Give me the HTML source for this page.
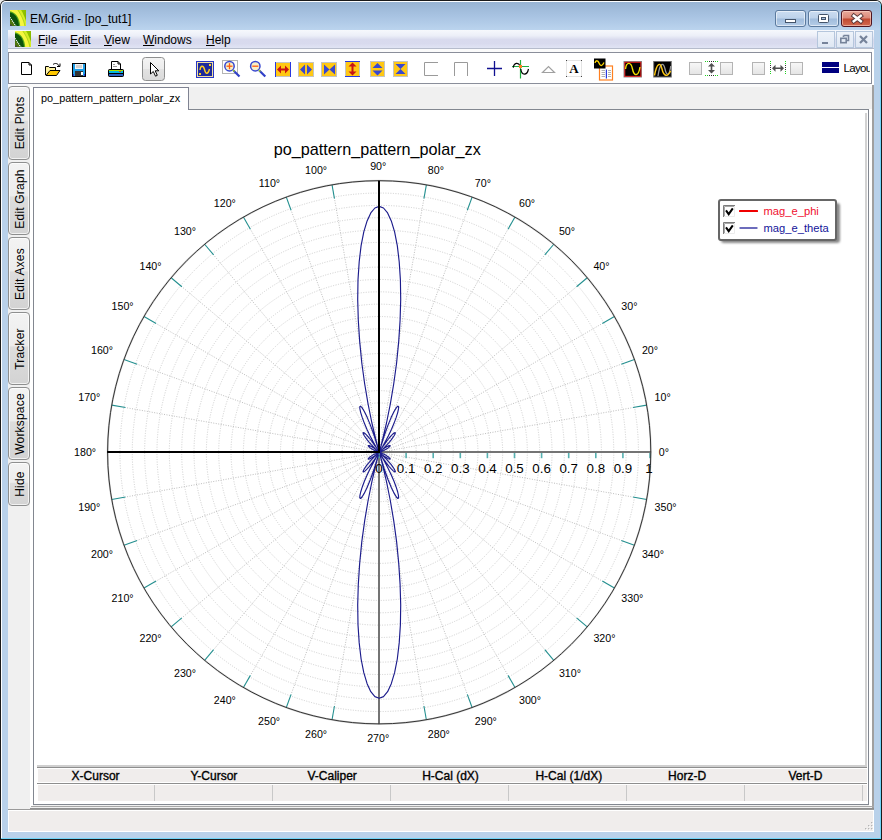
<!DOCTYPE html>
<html><head><meta charset="utf-8"><title>EM.Grid - [po_tut1]</title>
<style>
html,body{margin:0;padding:0;}
body{width:882px;height:840px;overflow:hidden;background:#ececec;font-family:"Liberation Sans",Arial,sans-serif;font-size:12px;color:#000;position:relative;}
.abs{position:absolute;}
#win{position:absolute;left:0;top:0;width:882px;height:840px;background:#1a1a1a;border-radius:6px 6px 0 0;}
#frame{position:absolute;left:1px;top:1px;width:880px;height:838px;background:#b9d1ea;border-radius:5px 5px 0 0;box-shadow:inset -1px -1px 0 #6fd4f8, inset 1px 1px 0 #fdfeff;}
#frameHi{display:none}
#title{position:absolute;left:2px;top:2px;width:878px;height:28px;border-radius:4px 4px 0 0;background:linear-gradient(#98b4d3,#a8c3e2 50%,#bbd4ee);}
#ttext{position:absolute;left:30px;top:12px;font-size:12px;line-height:14px;white-space:nowrap;}
.cap{position:absolute;top:10px;height:17px;width:31px;border-radius:3px;box-sizing:border-box;border:1px solid #5b7a9e;box-shadow:inset 0 0 0 1px rgba(255,255,255,.55);background:linear-gradient(#cbddf1,#bdd2ea 48%,#a0bcdc 52%,#b4cce7);}
.cap.close{border-color:#4e1420;background:linear-gradient(#e8aa9c,#dc8878 48%,#c04830 52%,#d26a50);box-shadow:inset 0 0 0 1px rgba(255,220,210,.55);}
#menubar{position:absolute;left:8px;top:30px;width:866px;height:19px;background:linear-gradient(#f6f8fc 0,#eceff8 30%,#d9dbee 50%,#d8daee 70%,#e2e6f5 100%);box-shadow:inset 0 -1px 0 #b6bccc;}
.mi{position:absolute;top:33px;font-size:12px;line-height:14px;white-space:nowrap;}
.mi u{text-decoration:underline;}
.mdi{position:absolute;top:31px;width:17px;height:17px;box-sizing:border-box;border:1px solid #b5c6dc;background:linear-gradient(#eef3fa,#dfe7f3);}
#client{position:absolute;left:8px;top:49px;width:866px;height:783px;background:#f0f0f0;}
#tbgap{position:absolute;left:8px;top:49px;width:866px;height:3px;background:#fbfbfb;}
#toolbar{position:absolute;left:8px;top:52px;width:864px;height:32px;box-sizing:border-box;border:1px solid #8a8e9a;background:#fff;}
#tbunder{position:absolute;left:8px;top:84px;width:866px;height:3px;background:#fafafa;}
.vtab{position:absolute;left:8px;width:22px;box-sizing:border-box;border:1px solid #8e8f8f;border-radius:4px;background:linear-gradient(#f3f3f3,#ececec 46%,#dddddd 48%,#d3d3d3);box-shadow:inset 0 0 0 1px rgba(255,255,255,.7);}
.vtab span{position:absolute;left:calc(50% + 1px);top:50%;white-space:nowrap;font-size:12px;letter-spacing:0.2px;line-height:14px;transform:translate(-50%,-50%) rotate(-90deg);}
#ptab{position:absolute;left:33px;top:87px;width:156px;height:23px;box-sizing:border-box;border:1px solid #7f8392;border-bottom:none;background:#fff;}
#ptab span{position:absolute;left:7px;top:4px;font-size:10.9px;line-height:13px;white-space:nowrap;}
#pframe{position:absolute;left:33px;top:109px;width:836px;height:696px;box-sizing:border-box;border:1px solid #828790;background:#fff;}
#pwhite{position:absolute;left:30px;top:87px;width:3px;height:720px;background:#fff;}
.th{position:absolute;top:769px;height:14px;font-size:12px;font-weight:normal;-webkit-text-stroke:0.35px #000;line-height:14px;text-align:center;width:118px;white-space:nowrap;}
</style></head><body>
<div id="win">
<div id="frame"></div><div id="frameHi"></div>
<div id="title"></div>
<svg class="abs" style="left:10px;top:10px" width="16" height="16" viewBox="0 0 16 16"><defs><filter id="ba" x="-10%" y="-10%" width="120%" height="120%"><feGaussianBlur stdDeviation="0.45"/></filter><clipPath id="ca"><rect width="16" height="16"/></clipPath><linearGradient id="ga" x1="0" y1="0" x2="1" y2="1"><stop offset="0" stop-color="#a4d400"/><stop offset="1" stop-color="#74a800"/></linearGradient></defs><rect width="16" height="16" fill="#7cb200"/><g clip-path="url(#ca)"><g filter="url(#ba)"><rect x="6" y="-1" width="11" height="18" fill="url(#ga)"/><path d="M-1 -1H10.500C13.500 4 15.800 9 16.500 13.500V17H-1Z" fill="#d6ee28"/><path d="M-1 -1H6.800C10.500 4 13.600 10 14.800 17H-1Z" fill="#f6f640"/><path d="M7.200 -1C10.800 4 14 10 15.200 17" fill="none" stroke="#9cc414" stroke-width="0.600"/><path d="M-1 1.200C5 1.500 9.800 7 10.300 17H-1Z" fill="#56a818"/><path d="M-1 2.600C4.500 2.800 8.600 7.500 9 17H-1Z" fill="#075210"/><path d="M-1 9C2.500 10 5 13 5.600 17H-1Z" fill="#4f7410"/></g><path d="M0 7.300L5.900 16.200" stroke="#fff" stroke-width="1.200" stroke-dasharray="1.100 0.900"/><rect x="0" y="14.500" width="2" height="1.500" fill="#443848" opacity=".8"/></g></svg>
<div id="ttext">EM.Grid - [po_tut1]</div>
<div class="cap" style="left:775px"><svg width="28" height="15" style="position:absolute;left:0;top:0"><rect x="9.5" y="8.5" width="10" height="3" fill="#fff" stroke="#44546a" stroke-width="1"/></svg></div>
<div class="cap" style="left:808px"><svg width="28" height="15" style="position:absolute;left:0;top:0"><rect x="9.500" y="3.500" width="10" height="8" rx="1" fill="#fff" stroke="#44546a" stroke-width="1"/><rect x="12.5" y="6.500" width="4" height="2" fill="#a9c0dc" stroke="#44546a" stroke-width="1"/></svg></div>
<div class="cap close" style="left:841px;width:31px"><svg width="29" height="15" style="position:absolute;left:0;top:0"><path d="M11.800 4.800L18.800 10.200M18.800 4.800L11.800 10.200" stroke="#5a3838" stroke-width="4.400" stroke-linecap="square"/><path d="M11.800 4.800L18.800 10.200M18.800 4.800L11.800 10.200" stroke="#fff" stroke-width="2.500" stroke-linecap="square"/></svg></div>
<div id="menubar"></div>
<svg class="abs" style="left:15px;top:31px" width="16" height="16" viewBox="0 0 16 16"><defs><filter id="bm" x="-10%" y="-10%" width="120%" height="120%"><feGaussianBlur stdDeviation="0.45"/></filter><clipPath id="cm"><rect width="16" height="16"/></clipPath><linearGradient id="gm" x1="0" y1="0" x2="1" y2="1"><stop offset="0" stop-color="#a4d400"/><stop offset="1" stop-color="#74a800"/></linearGradient></defs><rect width="16" height="16" fill="#7cb200"/><g clip-path="url(#cm)"><g filter="url(#bm)"><rect x="6" y="-1" width="11" height="18" fill="url(#gm)"/><path d="M-1 -1H10.500C13.500 4 15.800 9 16.500 13.500V17H-1Z" fill="#d6ee28"/><path d="M-1 -1H6.800C10.500 4 13.600 10 14.800 17H-1Z" fill="#f6f640"/><path d="M7.200 -1C10.800 4 14 10 15.200 17" fill="none" stroke="#9cc414" stroke-width="0.600"/><path d="M-1 1.200C5 1.500 9.800 7 10.300 17H-1Z" fill="#56a818"/><path d="M-1 2.600C4.500 2.800 8.600 7.500 9 17H-1Z" fill="#075210"/><path d="M-1 9C2.500 10 5 13 5.600 17H-1Z" fill="#4f7410"/></g><path d="M0 7.300L5.900 16.200" stroke="#fff" stroke-width="1.200" stroke-dasharray="1.100 0.900"/><rect x="0" y="14.500" width="2" height="1.500" fill="#443848" opacity=".8"/></g></svg>
<div class="mi" style="left:38px"><u>F</u>ile</div>
<div class="mi" style="left:70px"><u>E</u>dit</div>
<div class="mi" style="left:104px"><u>V</u>iew</div>
<div class="mi" style="left:143px"><u>W</u>indows</div>
<div class="mi" style="left:206px"><u>H</u>elp</div>
<div class="mdi" style="left:817px;width:18px"><svg width="15" height="15" style="position:absolute;left:0;top:0"><rect x="4" y="10" width="6" height="2" fill="#76839a"/></svg></div>
<div class="mdi" style="left:836px;width:18px"><svg width="15" height="15" style="position:absolute;left:0;top:0"><path d="M6.500 3.500H11.500V8.500H10M6.500 5V3.500" fill="none" stroke="#76839a" stroke-width="1.600"/><rect x="3.800" y="6.300" width="5.400" height="4.400" fill="none" stroke="#76839a" stroke-width="1.600"/></svg></div>
<div class="mdi" style="left:855px;width:18px"><svg width="15" height="15" style="position:absolute;left:0;top:0"><path d="M4 4L11 11M11 4L4 11" stroke="#76839a" stroke-width="2.200"/></svg></div>
<div id="client"></div>
<div id="tbgap"></div>
<div id="toolbar"></div>
<svg class="abs" style="left:9px;top:53px" width="862" height="30" viewBox="9 53 862 30">
<path d="M21.500 62.500H29L31.500 65V74.500H21.500Z" fill="#fff" stroke="#000" stroke-width="1"/><path d="M29 62.500V65H31.500" fill="none" stroke="#000" stroke-width="1"/>
<path d="M45.500 75V66.500H48.500L49.500 67.500H55.500V70.500" fill="#fff3a0" stroke="#000" stroke-width="1"/><path d="M46 75.500L50 70.500H60L56.500 75.500Z" fill="#ffc800" stroke="#000" stroke-width="1"/><path d="M53 64.500C55 62.800 58 63.200 59 66" fill="none" stroke="#000" stroke-width="1"/><path d="M57 66.500H60V63.500" fill="none" stroke="#000" stroke-width="1"/>
<rect x="72.500" y="63.500" width="13" height="13" fill="#1e9ee8" stroke="#000" stroke-width="1"/><rect x="75" y="64" width="8" height="5" fill="#f4f4f4"/><rect x="76" y="65" width="6" height="3" fill="#d0d0d0"/><rect x="75" y="71" width="8" height="5" fill="#333"/><rect x="81" y="72" width="2" height="3" fill="#fff"/><rect x="73" y="74" width="1" height="2" fill="#3030d0"/><rect x="84" y="74" width="1" height="2" fill="#3030d0"/>
<path d="M111.500 69V61.500H118L120.500 64V69" fill="#fff" stroke="#000" stroke-width="1"/><path d="M118 61.500V64H120.500" fill="none" stroke="#000" stroke-width="1"/><path d="M113 64.500H115M113 66.500H117" stroke="#999" stroke-width="1"/>
<rect x="108.500" y="69.500" width="15" height="7" rx="1" fill="#000" stroke="#000" stroke-width="1"/><rect x="109" y="70" width="14" height="1" fill="#a8e000"/><rect x="109" y="71" width="14" height="2" fill="#00b4e0"/><rect x="109" y="74" width="14" height="2" fill="#2a5fc0"/><rect x="119" y="71" width="2" height="1" fill="#e03020"/>
<defs><linearGradient id="bg1" x1="0" y1="0" x2="0" y2="1"><stop offset="0" stop-color="#f4f4f4"/><stop offset=".5" stop-color="#ececec"/><stop offset=".52" stop-color="#e2e2e2"/><stop offset="1" stop-color="#dadada"/></linearGradient><linearGradient id="bg2" x1="0" y1="0" x2="0" y2="1"><stop offset="0" stop-color="#f8f8f8"/><stop offset="1" stop-color="#e4e4e4"/></linearGradient></defs>
<rect x="142.500" y="57.500" width="22" height="23" rx="3" fill="url(#bg1)" stroke="#8e8f8f" stroke-width="1"/>
<path d="M150.500 62.500V74L153.300 71.500L155.500 76.200L157.300 75.300L155.200 70.800H158.800Z" fill="#fff" stroke="#000" stroke-width="1" stroke-linejoin="miter"/>
<rect x="196" y="61" width="18" height="17" fill="#2838c8"/><rect x="197" y="62" width="16" height="15" fill="#f0e0a0"/><rect x="198" y="63" width="14" height="13" fill="#1c2a9c"/><path d="M200 70C200.500 65 203.500 65 204.500 69.500S208 75 209.500 69" fill="none" stroke="#ffd020" stroke-width="1.400"/><rect x="209" y="64" width="2" height="2" fill="#ffd020"/><rect x="199" y="73" width="2" height="2" fill="#ffd020"/>
<rect x="222.500" y="60.500" width="15" height="13" fill="none" stroke="#b4b4b4" stroke-width="1"/>
<path d="M233.5 70.500L239.5 76.500" stroke="#3040c8" stroke-width="2.200"/><path d="M233.0 70L234.5 71.500" stroke="#a0d020" stroke-width="1.500"/>
<circle cx="229.5" cy="66.200" r="4.700" fill="#f7f0c8" stroke="#3848d0" stroke-width="1.500"/>
<path d="M226.5 66.200H232.5" stroke="#ff5a10" stroke-width="1.300"/>
<path d="M229.5 63.200V69.200" stroke="#ff5a10" stroke-width="1.300"/>
<path d="M259.3 70.500L265.3 76.500" stroke="#3040c8" stroke-width="2.200"/><path d="M258.8 70L260.3 71.500" stroke="#a0d020" stroke-width="1.500"/>
<circle cx="255.3" cy="66.200" r="4.700" fill="#f7f0c8" stroke="#3848d0" stroke-width="1.500"/>
<path d="M252.3 66.200H258.3" stroke="#ff5a10" stroke-width="1.300"/>
<rect x="275" y="62" width="16" height="15" fill="#ffc814"/><rect x="275.5" y="62.5" width="15" height="14" fill="none" stroke="#c4c4c4" stroke-width="1"/>
<rect x="275" y="62" width="1" height="15" fill="#2838e0"/><rect x="290" y="62" width="1" height="15" fill="#2838e0"/>
<path d="M277 69.500L281 65.500V68.500H285V65.500L289 69.500L285 73.500V70.500H281V73.500Z" fill="#c81414"/>
<rect x="298" y="62" width="16" height="15" fill="#ffc814"/><rect x="298.5" y="62.5" width="15" height="14" fill="none" stroke="#c4c4c4" stroke-width="1"/>
<path d="M300 69.500L305 64.500V74.500Z M312 69.500L307 64.500V74.500Z" fill="#3848d0"/>
<rect x="321" y="62" width="16" height="15" fill="#ffc814"/><rect x="321.5" y="62.5" width="15" height="14" fill="none" stroke="#c4c4c4" stroke-width="1"/>
<path d="M324 64.500L329.500 69.500L324 74.500Z M335 64.500L329.500 69.500L335 74.500Z" fill="#3848d0"/>
<rect x="345" y="61" width="15" height="16" fill="#ffc814"/><rect x="345.5" y="61.5" width="14" height="15" fill="none" stroke="#c4c4c4" stroke-width="1"/>
<rect x="345" y="61" width="15" height="1" fill="#2838e0"/><rect x="345" y="76" width="15" height="1" fill="#2838e0"/>
<path d="M352.500 62.500L356.500 66.500H353.500V71.500H356.500L352.500 75.500L348.500 71.500H351.500V66.500H348.500Z" fill="#c81414"/>
<rect x="370" y="61" width="15" height="16" fill="#ffc814"/><rect x="370.5" y="61.5" width="14" height="15" fill="none" stroke="#c4c4c4" stroke-width="1"/>
<path d="M377.500 63L382.500 68H372.500Z M377.500 75.500L382.500 70.500H372.500Z" fill="#3848d0"/>
<rect x="393" y="61" width="15" height="16" fill="#ffc814"/><rect x="393.5" y="61.5" width="14" height="15" fill="none" stroke="#c4c4c4" stroke-width="1"/>
<path d="M395.500 64H405.500L400.500 69Z M395.500 74H405.500L400.500 69Z" fill="#3848d0"/>
<path d="M438 62.500H424.500V75.500H438" fill="none" stroke="#9a9a9a" stroke-width="1"/>
<path d="M454.500 76V62.500H467.500V76" fill="none" stroke="#9a9a9a" stroke-width="1"/>
<path d="M487 68.500H502M494.500 61V76" stroke="#101090" stroke-width="1.300"/>
<path d="M520.500 60V78.500M512 66.500H529" stroke="#20b040" stroke-width="1.200"/>
<path d="M513.300 67.600C514 62.500 518.500 62 520 66M520.800 69C521.500 75.500 527 76 528.500 69" fill="none" stroke="#000" stroke-width="1.200"/>
<rect x="519" y="65" width="3" height="3" fill="#ff8020"/>
<path d="M542.500 72.500L548.500 66.500L554.500 72.500Z" fill="none" stroke="#a0a0a0" stroke-width="1.200"/>
<rect x="566.500" y="60.500" width="15" height="16" fill="#fff" stroke="#c8c8c8" stroke-width="1" stroke-dasharray="1 1"/>
<g fill="#444"><rect x="566" y="60" width="1" height="1"/><rect x="581" y="60" width="1" height="1"/><rect x="566" y="76" width="1" height="1"/><rect x="581" y="76" width="1" height="1"/></g>
<text x="574" y="73" text-anchor="middle" font-family="'Liberation Serif', 'Times New Roman', serif" font-weight="bold" font-size="13" fill="#000">A</text>
<rect x="599.500" y="66" width="13" height="14" fill="#fff" stroke="#ff8020" stroke-width="1.200"/>
<path d="M601.500 70.500H605M601.500 72.500H605M601.500 74.500H605M601.500 76.500H605M608 70.500H611M608 72.500H611M608 74.500H611M608 76.500H611" stroke="#b0b0b0" stroke-width="1"/><rect x="605.800" y="69.500" width="1.200" height="9" fill="#2838e0"/>
<rect x="594" y="58.500" width="11.500" height="10" fill="#000"/><path d="M595 63C595.500 60 598 60 599 63S602 67 604 62.500" fill="none" stroke="#ffd800" stroke-width="1.300"/>
<rect x="623.500" y="61" width="18.500" height="16.500" fill="#8a8a8a"/><rect x="624.300" y="61.800" width="17" height="15" fill="#e01818"/><rect x="625.300" y="62.800" width="15" height="13" fill="#000"/>
<path d="M625.500 69C626.500 61.500 631 61.500 632.500 69S638.500 77 640 67" fill="none" stroke="#f0e000" stroke-width="1.400"/>
<rect x="653.200" y="61" width="18.600" height="16.500" fill="#6a6a6a"/><rect x="654.200" y="62" width="16.600" height="14.500" fill="#000"/>
<path d="M658 76C660 62 663.500 62 665 69S669 77 670.800 66" fill="none" stroke="#9a9a9a" stroke-width="1.300"/>
<path d="M654.500 75.500C657 62 660.500 62 662 69S667.500 78 670.500 71" fill="none" stroke="#ffc810" stroke-width="1.400"/>
<rect x="689.5" y="62.500" width="12" height="12" fill="url(#bg2)" stroke="#b4b4b4" stroke-width="1"/>
<rect x="720.5" y="62.500" width="12" height="12" fill="url(#bg2)" stroke="#b4b4b4" stroke-width="1"/>
<rect x="752.5" y="62.500" width="12" height="12" fill="url(#bg2)" stroke="#b4b4b4" stroke-width="1"/>
<rect x="790.5" y="62.500" width="12" height="12" fill="url(#bg2)" stroke="#b4b4b4" stroke-width="1"/>
<path d="M705 61.500H718M705 75.500H718" stroke="#20d020" stroke-width="1" stroke-dasharray="1 1"/><path d="M709 61.500H714M709 75.500H714" stroke="#303030" stroke-width="1" stroke-dasharray="1 1"/>
<path d="M711.500 63L715 66.500H712.300V70H715L711.500 73.500L708 70H710.700V66.500H708Z" fill="#505050"/>
<path d="M770.500 61V74M785.500 61V74" stroke="#20d020" stroke-width="1" stroke-dasharray="1 1"/><path d="M770.500 65V71M785.500 65V71" stroke="#303030" stroke-width="1" stroke-dasharray="1 1"/>
<path d="M772 68.300L775.500 64.800V67.500H780.500V64.800L784 68.300L780.500 71.800V69.100H775.500V71.800Z" fill="#505050"/>
<rect x="822" y="62" width="17" height="11" fill="#000080"/><rect x="822" y="67" width="17" height="1" fill="#fff"/>
</svg>
<div class="abs" style="left:843.500px;top:60px;width:26.500px;height:16px;overflow:hidden;font-size:11.500px;letter-spacing:-0.700px;line-height:16px;white-space:nowrap">Layout</div>
<div id="tbunder"></div>
<div class="abs" style="left:872px;top:49px;width:2px;height:36px;background:#fff"></div>
<div class="vtab" style="top:86px;height:74px"><span>Edit Plots</span></div>
<div class="vtab" style="top:162px;height:73px"><span>Edit Graph</span></div>
<div class="vtab" style="top:237px;height:73px"><span>Edit Axes</span></div>
<div class="vtab" style="top:312px;height:73px"><span>Tracker</span></div>
<div class="vtab" style="top:387px;height:73px"><span>Workspace</span></div>
<div class="vtab" style="top:462px;height:44px"><span>Hide</span></div>
<div id="pwhite"></div>
<div class="abs" style="left:869px;top:87px;width:3px;height:720px;background:#fff"></div>
<div class="abs" style="left:189px;top:87px;width:683px;height:22px;background:#f0f0f0"></div>
<div class="abs" style="left:872px;top:85px;width:2px;height:725px;background:#a0a0a0"></div>
<div id="pframe"></div>
<div id="ptab"><span>po_pattern_pattern_polar_zx</span></div>
<div class="abs" style="left:865px;top:113px;width:2px;height:654px;background:#d2d2d2"></div>
<svg id="plot" width="830" height="655" viewBox="35 111 830 655" style="position:absolute;left:35px;top:111px">
<g fill="none" stroke="#cecece" stroke-width="1" stroke-dasharray="1 1.500">
<circle cx="379.2" cy="452.3" r="12.35"/>
<circle cx="379.2" cy="452.3" r="24.69"/>
<circle cx="379.2" cy="452.3" r="37.04"/>
<circle cx="379.2" cy="452.3" r="49.38"/>
<circle cx="379.2" cy="452.3" r="61.73"/>
<circle cx="379.2" cy="452.3" r="74.07"/>
<circle cx="379.2" cy="452.3" r="86.42"/>
<circle cx="379.2" cy="452.3" r="98.76"/>
<circle cx="379.2" cy="452.3" r="111.11"/>
<circle cx="379.2" cy="452.3" r="123.45"/>
<circle cx="379.2" cy="452.3" r="135.80"/>
<circle cx="379.2" cy="452.3" r="148.15"/>
<circle cx="379.2" cy="452.3" r="160.49"/>
<circle cx="379.2" cy="452.3" r="172.84"/>
<circle cx="379.2" cy="452.3" r="185.18"/>
<circle cx="379.2" cy="452.3" r="197.53"/>
<circle cx="379.2" cy="452.3" r="209.87"/>
<circle cx="379.2" cy="452.3" r="222.22"/>
<circle cx="379.2" cy="452.3" r="234.56"/>
<circle cx="379.2" cy="452.3" r="246.91"/>
<circle cx="379.2" cy="452.3" r="259.25"/>
</g>
<g fill="none" stroke="#bebebe" stroke-width="1" stroke-dasharray="1 1.500">
<line x1="379.2" y1="452.3" x2="632.89" y2="407.57"/>
<line x1="379.2" y1="452.3" x2="621.26" y2="364.20"/>
<line x1="379.2" y1="452.3" x2="602.29" y2="323.50"/>
<line x1="379.2" y1="452.3" x2="576.53" y2="286.72"/>
<line x1="379.2" y1="452.3" x2="544.78" y2="254.97"/>
<line x1="379.2" y1="452.3" x2="508.00" y2="229.21"/>
<line x1="379.2" y1="452.3" x2="467.30" y2="210.24"/>
<line x1="379.2" y1="452.3" x2="423.93" y2="198.61"/>
<line x1="379.2" y1="452.3" x2="334.47" y2="198.61"/>
<line x1="379.2" y1="452.3" x2="291.10" y2="210.24"/>
<line x1="379.2" y1="452.3" x2="250.40" y2="229.21"/>
<line x1="379.2" y1="452.3" x2="213.62" y2="254.97"/>
<line x1="379.2" y1="452.3" x2="181.87" y2="286.72"/>
<line x1="379.2" y1="452.3" x2="156.11" y2="323.50"/>
<line x1="379.2" y1="452.3" x2="137.14" y2="364.20"/>
<line x1="379.2" y1="452.3" x2="125.51" y2="407.57"/>
<line x1="379.2" y1="452.3" x2="125.51" y2="497.03"/>
<line x1="379.2" y1="452.3" x2="137.14" y2="540.40"/>
<line x1="379.2" y1="452.3" x2="156.11" y2="581.10"/>
<line x1="379.2" y1="452.3" x2="181.87" y2="617.88"/>
<line x1="379.2" y1="452.3" x2="213.62" y2="649.63"/>
<line x1="379.2" y1="452.3" x2="250.40" y2="675.39"/>
<line x1="379.2" y1="452.3" x2="291.10" y2="694.36"/>
<line x1="379.2" y1="452.3" x2="334.47" y2="705.99"/>
<line x1="379.2" y1="452.3" x2="423.93" y2="705.99"/>
<line x1="379.2" y1="452.3" x2="467.30" y2="694.36"/>
<line x1="379.2" y1="452.3" x2="508.00" y2="675.39"/>
<line x1="379.2" y1="452.3" x2="544.78" y2="649.63"/>
<line x1="379.2" y1="452.3" x2="576.53" y2="617.88"/>
<line x1="379.2" y1="452.3" x2="602.29" y2="581.10"/>
<line x1="379.2" y1="452.3" x2="621.26" y2="540.40"/>
<line x1="379.2" y1="452.3" x2="632.89" y2="497.03"/>
</g>
<g stroke="#238f8f" stroke-width="1.100">
<line x1="646.67" y1="405.14" x2="632.89" y2="407.57"/>
<line x1="634.42" y1="359.41" x2="621.26" y2="364.20"/>
<line x1="614.41" y1="316.50" x2="602.29" y2="323.50"/>
<line x1="587.26" y1="277.72" x2="576.53" y2="286.72"/>
<line x1="553.78" y1="244.24" x2="544.78" y2="254.97"/>
<line x1="515.00" y1="217.09" x2="508.00" y2="229.21"/>
<line x1="472.09" y1="197.08" x2="467.30" y2="210.24"/>
<line x1="426.36" y1="184.83" x2="423.93" y2="198.61"/>
<line x1="332.04" y1="184.83" x2="334.47" y2="198.61"/>
<line x1="286.31" y1="197.08" x2="291.10" y2="210.24"/>
<line x1="243.40" y1="217.09" x2="250.40" y2="229.21"/>
<line x1="204.62" y1="244.24" x2="213.62" y2="254.97"/>
<line x1="171.14" y1="277.72" x2="181.87" y2="286.72"/>
<line x1="143.99" y1="316.50" x2="156.11" y2="323.50"/>
<line x1="123.98" y1="359.41" x2="137.14" y2="364.20"/>
<line x1="111.73" y1="405.14" x2="125.51" y2="407.57"/>
<line x1="111.73" y1="499.46" x2="125.51" y2="497.03"/>
<line x1="123.98" y1="545.19" x2="137.14" y2="540.40"/>
<line x1="143.99" y1="588.10" x2="156.11" y2="581.10"/>
<line x1="171.14" y1="626.88" x2="181.87" y2="617.88"/>
<line x1="204.62" y1="660.36" x2="213.62" y2="649.63"/>
<line x1="243.40" y1="687.51" x2="250.40" y2="675.39"/>
<line x1="286.31" y1="707.52" x2="291.10" y2="694.36"/>
<line x1="332.04" y1="719.77" x2="334.47" y2="705.99"/>
<line x1="426.36" y1="719.77" x2="423.93" y2="705.99"/>
<line x1="472.09" y1="707.52" x2="467.30" y2="694.36"/>
<line x1="515.00" y1="687.51" x2="508.00" y2="675.39"/>
<line x1="553.78" y1="660.36" x2="544.78" y2="649.63"/>
<line x1="587.26" y1="626.88" x2="576.53" y2="617.88"/>
<line x1="614.41" y1="588.10" x2="602.29" y2="581.10"/>
<line x1="634.42" y1="545.19" x2="621.26" y2="540.40"/>
<line x1="646.67" y1="499.46" x2="632.89" y2="497.03"/>
</g>
<rect x="379.0" y="451.0" width="272.1" height="2" fill="#747474"/>
<rect x="378.0" y="452.0" width="2" height="272.1" fill="#747474"/>
<g fill="#55b0b0">
<rect x="378.20" y="453.0" width="1.600" height="5.200"/>
<rect x="405.30" y="453.0" width="1.600" height="5.200"/>
<rect x="432.40" y="453.0" width="1.600" height="5.200"/>
<rect x="459.50" y="453.0" width="1.600" height="5.200"/>
<rect x="486.60" y="453.0" width="1.600" height="5.200"/>
<rect x="513.70" y="453.0" width="1.600" height="5.200"/>
<rect x="540.80" y="453.0" width="1.600" height="5.200"/>
<rect x="567.90" y="453.0" width="1.600" height="5.200"/>
<rect x="595.00" y="453.0" width="1.600" height="5.200"/>
<rect x="622.10" y="453.0" width="1.600" height="5.200"/>
<rect x="649.20" y="453.0" width="1.600" height="5.200"/>
</g>
<circle cx="379.2" cy="452.3" r="271.6" fill="none" stroke="#808080" stroke-opacity="0.350" stroke-width="1.800"/>
<circle cx="379.2" cy="452.3" r="271.6" fill="none" stroke="#2c2c2c" stroke-width="0.950"/>
<path d="M379.2 206.4 L374.9 208.0 L370.8 212.9 L367.1 220.9 L363.8 231.9 L361.1 245.6 L359.2 261.7 L358.0 279.8 L357.7 299.5 L358.3 320.2 L359.7 341.6 L361.8 363.0 L364.7 384.0 L368.1 404.1 L371.9 423.0 L376.0 440.2 L378.3 449.2 L374.3 436.1 L370.5 425.4 L367.1 417.1 L364.2 411.2 L362.0 407.6 L360.5 406.1 L359.8 406.7 L359.9 408.9 L360.7 412.6 L362.2 417.4 L364.3 423.1 L366.9 429.2 L370.0 435.7 L373.3 442.0 L376.7 448.2 L378.3 450.8 L375.0 445.8 L371.9 441.5 L369.2 438.0 L366.9 435.4 L365.2 433.7 L363.9 432.7 L363.2 432.6 L363.1 433.1 L363.5 434.2 L364.3 435.8 L365.6 437.7 L367.2 439.9 L369.2 442.3 L371.3 444.7 L373.5 447.0 L375.8 449.3 L378.1 451.4 L378.1 451.4 L376.0 449.7 L374.2 448.4 L372.6 447.3 L371.2 446.5 L370.1 445.9 L369.2 445.6 L368.7 445.5 L368.3 445.5 L368.3 445.7 L368.4 446.1 L368.8 446.5 L369.3 447.0 L369.9 447.6 L370.7 448.2 L371.5 448.7 L372.4 449.3 L373.3 449.8 L374.2 450.3 L375.1 450.7 L376.0 451.1 L376.8 451.5 L377.5 451.8 L378.2 452.0 L378.8 452.2 L379.0 452.3 L378.6 452.1 L378.2 452.1 L377.9 452.0 L377.7 452.0 L377.6 452.0 L377.5 452.0 L377.5 452.1 L377.5 452.1 L377.6 452.1 L377.8 452.2 L377.9 452.2 L378.2 452.2 L378.4 452.3 L378.8 452.3 L379.2 452.3 L378.8 452.3 L378.4 452.3 L378.2 452.4 L377.9 452.4 L377.8 452.4 L377.6 452.5 L377.5 452.5 L377.5 452.5 L377.5 452.6 L377.6 452.6 L377.7 452.6 L377.9 452.6 L378.2 452.5 L378.6 452.5 L379.0 452.3 L378.8 452.4 L378.2 452.6 L377.5 452.8 L376.8 453.1 L376.0 453.5 L375.1 453.9 L374.2 454.3 L373.3 454.8 L372.4 455.3 L371.5 455.9 L370.7 456.4 L369.9 457.0 L369.3 457.6 L368.8 458.1 L368.4 458.5 L368.3 458.9 L368.3 459.1 L368.7 459.1 L369.2 459.0 L370.1 458.7 L371.2 458.1 L372.6 457.3 L374.2 456.2 L376.0 454.9 L378.1 453.2 L378.1 453.2 L375.8 455.3 L373.5 457.6 L371.3 459.9 L369.2 462.3 L367.2 464.7 L365.6 466.9 L364.3 468.8 L363.5 470.4 L363.1 471.5 L363.2 472.0 L363.9 471.9 L365.2 470.9 L366.9 469.2 L369.2 466.6 L371.9 463.1 L375.0 458.8 L378.3 453.8 L376.7 456.4 L373.3 462.6 L370.0 468.9 L366.9 475.4 L364.3 481.5 L362.2 487.2 L360.7 492.0 L359.9 495.7 L359.8 497.9 L360.5 498.5 L362.0 497.0 L364.2 493.4 L367.1 487.5 L370.5 479.2 L374.3 468.5 L378.3 455.4 L376.0 464.4 L371.9 481.6 L368.1 500.5 L364.7 520.6 L361.8 541.6 L359.7 563.0 L358.3 584.4 L357.7 605.1 L358.0 624.8 L359.2 642.9 L361.1 659.0 L363.8 672.7 L367.1 683.7 L370.8 691.7 L374.9 696.6 L379.2 698.2 L383.5 696.6 L387.6 691.7 L391.3 683.7 L394.6 672.7 L397.3 659.0 L399.2 642.9 L400.4 624.8 L400.7 605.1 L400.1 584.4 L398.7 563.0 L396.6 541.6 L393.7 520.6 L390.3 500.5 L386.5 481.6 L382.4 464.4 L380.1 455.4 L384.1 468.5 L387.9 479.2 L391.3 487.5 L394.2 493.4 L396.4 497.0 L397.9 498.5 L398.6 497.9 L398.5 495.7 L397.7 492.0 L396.2 487.2 L394.1 481.5 L391.5 475.4 L388.4 468.9 L385.1 462.6 L381.7 456.4 L380.1 453.8 L383.4 458.8 L386.5 463.1 L389.2 466.6 L391.5 469.2 L393.2 470.9 L394.5 471.9 L395.2 472.0 L395.3 471.5 L394.9 470.4 L394.1 468.8 L392.8 466.9 L391.2 464.7 L389.2 462.3 L387.1 459.9 L384.9 457.6 L382.6 455.3 L380.3 453.2 L380.3 453.2 L382.4 454.9 L384.2 456.2 L385.8 457.3 L387.2 458.1 L388.3 458.7 L389.2 459.0 L389.7 459.1 L390.1 459.1 L390.1 458.9 L390.0 458.5 L389.6 458.1 L389.1 457.6 L388.5 457.0 L387.7 456.4 L386.9 455.9 L386.0 455.3 L385.1 454.8 L384.2 454.3 L383.3 453.9 L382.4 453.5 L381.6 453.1 L380.9 452.8 L380.2 452.6 L379.6 452.4 L379.4 452.3 L379.8 452.5 L380.2 452.5 L380.5 452.6 L380.7 452.6 L380.8 452.6 L380.9 452.6 L380.9 452.5 L380.9 452.5 L380.8 452.5 L380.6 452.4 L380.5 452.4 L380.2 452.4 L380.0 452.3 L379.6 452.3 L379.2 452.3 L379.6 452.3 L380.0 452.3 L380.2 452.2 L380.5 452.2 L380.6 452.2 L380.8 452.1 L380.9 452.1 L380.9 452.1 L380.9 452.0 L380.8 452.0 L380.7 452.0 L380.5 452.0 L380.2 452.1 L379.8 452.1 L379.4 452.3 L379.6 452.2 L380.2 452.0 L380.9 451.8 L381.6 451.5 L382.4 451.1 L383.3 450.7 L384.2 450.3 L385.1 449.8 L386.0 449.3 L386.9 448.7 L387.7 448.2 L388.5 447.6 L389.1 447.0 L389.6 446.5 L390.0 446.1 L390.1 445.7 L390.1 445.5 L389.7 445.5 L389.2 445.6 L388.3 445.9 L387.2 446.5 L385.8 447.3 L384.2 448.4 L382.4 449.7 L380.3 451.4 L380.3 451.4 L382.6 449.3 L384.9 447.0 L387.1 444.7 L389.2 442.3 L391.2 439.9 L392.8 437.7 L394.1 435.8 L394.9 434.2 L395.3 433.1 L395.2 432.6 L394.5 432.7 L393.2 433.7 L391.5 435.4 L389.2 438.0 L386.5 441.5 L383.4 445.8 L380.1 450.8 L381.7 448.2 L385.1 442.0 L388.4 435.7 L391.5 429.2 L394.1 423.1 L396.2 417.4 L397.7 412.6 L398.5 408.9 L398.6 406.7 L397.9 406.1 L396.4 407.6 L394.2 411.2 L391.3 417.1 L387.9 425.4 L384.1 436.1 L380.1 449.2 L382.4 440.2 L386.5 423.0 L390.3 404.1 L393.7 384.0 L396.6 363.0 L398.7 341.6 L400.1 320.2 L400.7 299.5 L400.4 279.8 L399.2 261.7 L397.3 245.6 L394.6 231.9 L391.3 220.9 L387.6 212.9 L383.5 208.0 L379.2 206.4" fill="none" stroke="#1c1c8c" stroke-width="1.15" stroke-linejoin="round"/>
<rect x="107.09999999999998" y="451.0" width="272.90000000000003" height="2" fill="#000"/>
<rect x="378.0" y="180.7" width="2" height="272.3" fill="#000"/>
<g font-family="'Liberation Sans', Arial, sans-serif" font-size="10.67" fill="#000">
<text x="658.8" y="456.3" text-anchor="start">0°</text>
<text x="654.6" y="400.7" text-anchor="start">10°</text>
<text x="641.9" y="353.7" text-anchor="start">20°</text>
<text x="621.3" y="309.5" text-anchor="start">30°</text>
<text x="593.4" y="269.6" text-anchor="start">40°</text>
<text x="558.9" y="235.1" text-anchor="start">50°</text>
<text x="519.0" y="207.2" text-anchor="start">60°</text>
<text x="474.8" y="186.6" text-anchor="start">70°</text>
<text x="427.8" y="173.9" text-anchor="start">80°</text>
<text x="378.2" y="169.7" text-anchor="middle">90°</text>
<text x="327.1" y="173.9" text-anchor="end">100°</text>
<text x="280.1" y="186.6" text-anchor="end">110°</text>
<text x="235.9" y="207.2" text-anchor="end">120°</text>
<text x="196.0" y="235.1" text-anchor="end">130°</text>
<text x="161.5" y="269.6" text-anchor="end">140°</text>
<text x="133.6" y="309.5" text-anchor="end">150°</text>
<text x="113.0" y="353.7" text-anchor="end">160°</text>
<text x="100.3" y="400.7" text-anchor="end">170°</text>
<text x="96.1" y="456.3" text-anchor="end">180°</text>
<text x="100.3" y="510.9" text-anchor="end">190°</text>
<text x="113.0" y="557.9" text-anchor="end">200°</text>
<text x="133.6" y="602.1" text-anchor="end">210°</text>
<text x="161.5" y="642.0" text-anchor="end">220°</text>
<text x="196.0" y="676.5" text-anchor="end">230°</text>
<text x="235.9" y="704.4" text-anchor="end">240°</text>
<text x="280.1" y="725.0" text-anchor="end">250°</text>
<text x="327.1" y="737.7" text-anchor="end">260°</text>
<text x="378.2" y="741.9" text-anchor="middle">270°</text>
<text x="427.8" y="737.7" text-anchor="start">280°</text>
<text x="474.8" y="725.0" text-anchor="start">290°</text>
<text x="519.0" y="704.4" text-anchor="start">300°</text>
<text x="558.9" y="676.5" text-anchor="start">310°</text>
<text x="593.4" y="642.0" text-anchor="start">320°</text>
<text x="621.3" y="602.1" text-anchor="start">330°</text>
<text x="641.9" y="557.9" text-anchor="start">340°</text>
<text x="654.6" y="510.9" text-anchor="start">350°</text>
</g>
<g font-family="'Liberation Sans', Arial, sans-serif" font-size="13.33" fill="#000" text-anchor="middle">
<text x="379.0" y="472.800">0</text>
<text x="406.1" y="472.800">0.1</text>
<text x="433.2" y="472.800">0.2</text>
<text x="460.3" y="472.800">0.3</text>
<text x="487.4" y="472.800">0.4</text>
<text x="514.5" y="472.800">0.5</text>
<text x="541.6" y="472.800">0.6</text>
<text x="568.7" y="472.800">0.7</text>
<text x="595.8" y="472.800">0.8</text>
<text x="622.9" y="472.800">0.9</text>
<text x="649.0" y="472.800">1</text>
</g>
<text x="377.300" y="155" text-anchor="middle" font-family="'Liberation Sans', Arial, sans-serif" font-size="16.200" fill="#000">po_pattern_pattern_polar_zx</text>
</svg>
<div class="abs" style="left:721px;top:203px;width:119px;height:40px;background:#8a8a8a;border-radius:3px;filter:blur(1.2px)"></div>
<div class="abs" style="left:718px;top:199px;width:119px;height:42px;box-sizing:border-box;border:2px solid #666;border-radius:3px;background:#fff"></div>
<svg class="abs" style="left:718px;top:199px" width="119" height="42" viewBox="718 199 119 42">
<rect x="723" y="205" width="12" height="12" fill="#fff"/><path d="M723.500 217V205.5H735" fill="none" stroke="#7c7c7c"/><path d="M724.500 216V206.5H734" fill="none" stroke="#a8a8a8"/><path d="M734.500 206V216.5H724" fill="none" stroke="#ececec"/><path d="M726 210.4L728.700 214.2L732.800 208.4" fill="none" stroke="#000" stroke-width="2"/><rect x="723" y="222" width="12" height="12" fill="#fff"/><path d="M723.500 234V222.5H735" fill="none" stroke="#7c7c7c"/><path d="M724.500 233V223.5H734" fill="none" stroke="#a8a8a8"/><path d="M734.500 223V233.5H724" fill="none" stroke="#ececec"/><path d="M726 227.4L728.700 231.2L732.800 225.4" fill="none" stroke="#000" stroke-width="2"/>
<rect x="739" y="210" width="19" height="2" rx="0.500" fill="#f00000"/>
<rect x="739.500" y="227" width="18" height="2" rx="0.500" fill="#6c6cbc"/>
<text x="763.500" y="215" font-family="'Liberation Sans', Arial, sans-serif" font-size="11.200" fill="#f01030">mag_e_phi</text>
<text x="763.500" y="232" font-family="'Liberation Sans', Arial, sans-serif" font-size="11.200" fill="#14149a">mag_e_theta</text>
</svg>
<div class="abs" style="left:37px;top:765px;width:830px;height:2px;background:#cfcfcf"></div>
<div class="abs" style="left:37px;top:767px;width:830px;height:1px;background:#8e8e8e"></div>
<div class="abs" style="left:38px;top:769px;width:829px;height:13px;background:#f0edec"></div>
<div class="abs" style="left:37px;top:783px;width:830px;height:1px;background:#8e8e8e"></div>
<div class="abs" style="left:38px;top:785px;width:829px;height:16px;background:#f0edec"></div>
<div class="th" style="left:36.6px">X-Cursor</div>
<div class="abs" style="left:154.0px;top:785px;width:1px;height:16px;background:#c8c8c8"></div>
<div class="th" style="left:154.9px">Y-Cursor</div>
<div class="abs" style="left:272.0px;top:785px;width:1px;height:16px;background:#c8c8c8"></div>
<div class="th" style="left:273.2px">V-Caliper</div>
<div class="abs" style="left:390.0px;top:785px;width:1px;height:16px;background:#c8c8c8"></div>
<div class="th" style="left:391.5px">H-Cal (dX)</div>
<div class="abs" style="left:508.0px;top:785px;width:1px;height:16px;background:#c8c8c8"></div>
<div class="th" style="left:509.8px">H-Cal (1/dX)</div>
<div class="abs" style="left:626.0px;top:785px;width:1px;height:16px;background:#c8c8c8"></div>
<div class="th" style="left:628.1px">Horz-D</div>
<div class="abs" style="left:744.0px;top:785px;width:1px;height:16px;background:#c8c8c8"></div>
<div class="th" style="left:746.4px">Vert-D</div>
<div class="abs" style="left:862.0px;top:785px;width:1px;height:16px;background:#c8c8c8"></div>
<div class="abs" style="left:31px;top:806px;width:843px;height:1px;background:#a8a8a8"></div>
<div class="abs" style="left:30px;top:808px;width:844px;height:2px;background:#8f8f8f"></div>
<div class="abs" style="left:8px;top:809px;width:866px;height:1px;background:#9a9a9a"></div>
<div class="abs" style="left:8px;top:810px;width:866px;height:22px;background:#fff"></div>
<div class="abs" style="left:9px;top:811px;width:864px;height:20px;background:#f0edec"></div>
<svg class="abs" style="left:862px;top:820px" width="12" height="12"><g fill="#fff"><rect x="10" y="3" width="1" height="1"/><rect x="7" y="6" width="1" height="1"/><rect x="10" y="6" width="1" height="1"/><rect x="4" y="9" width="1" height="1"/><rect x="7" y="9" width="1" height="1"/><rect x="10" y="9" width="1" height="1"/></g><g fill="#b4b4b4"><rect x="9" y="2" width="1.300" height="1.300"/><rect x="6" y="5" width="1.300" height="1.300"/><rect x="9" y="5" width="1.300" height="1.300"/><rect x="3" y="8" width="1.300" height="1.300"/><rect x="6" y="8" width="1.300" height="1.300"/><rect x="9" y="8" width="1.300" height="1.300"/></g></svg>
</div>
</body></html>
